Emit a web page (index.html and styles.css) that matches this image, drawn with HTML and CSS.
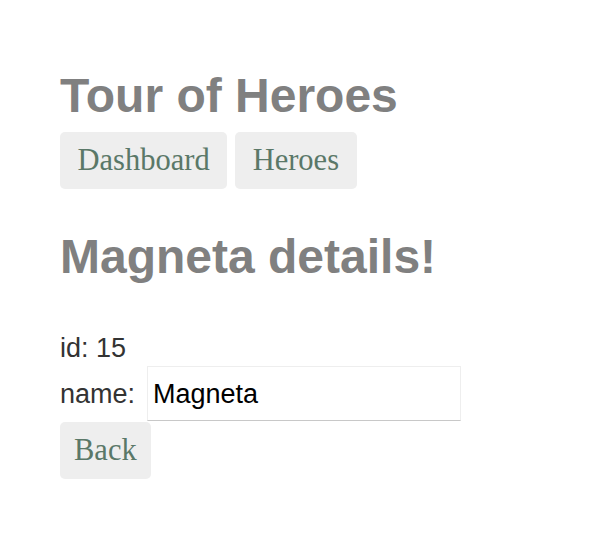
FILE: index.html
```html
<!DOCTYPE html>
<html>
<head>
<meta charset="utf-8">
<title>Tour of Heroes</title>
<link rel="stylesheet" href="styles.css">
</head>
<body>
<div class="app">
  <h1 class="title">Tour of Heroes</h1>
  <nav class="nav">
    <a class="btn">Dashboard</a>
    <a class="btn">Heroes</a>
  </nav>
  <div class="detail">
    <h2 class="title">Magneta details!</h2>
    <div class="row">id: 15</div>
    <div class="row name-row">
      <label class="label">name:</label>
      <input class="field" value="Magneta">
    </div>
    <button class="btn back">Back</button>
  </div>
</div>
</body>
</html>
```
FILE: styles.css
```css
html, body {
  margin: 0;
  padding: 0;
  background: #fff;
}
.app {
  padding: 69px 60px 0 60px;
  font-family: "Liberation Sans", Arial, sans-serif;
  color: #333;
}
.title {
  margin: 0;
  font-family: "Liberation Sans", Arial, sans-serif;
  font-weight: bold;
  font-size: 48px;
  line-height: 54px;
  color: #808080;
}
.nav {
  display: flex;
  gap: 8px;
  margin-top: 9px;
}
.btn {
  display: block;
  height: 57px;
  line-height: 57px;
  padding: 0 17.5px;
  background: #eee;
  border: none;
  border-radius: 5px;
  font-family: "Liberation Serif", Georgia, serif;
  font-size: 30.5px;
  color: #5a7868;
  box-sizing: border-box;
}
.detail {
  margin-top: 41px;
}
.detail .title {
  margin-bottom: 49px;
}
.row {
  font-size: 27px;
  line-height: 30px;
}
.name-row {
  display: flex;
  align-items: baseline;
  gap: 12px;
  margin-top: 3px;
}
.field {
  width: 314px;
  height: 55px;
  box-sizing: border-box;
  margin: 0;
  padding: 2px 5px 0 5px;
  border: 1px solid #eee;
  border-bottom-color: #c8c8c8;
  font-family: "Liberation Sans", Arial, sans-serif;
  font-size: 27px;
  color: #000;
  outline: none;
}
.back {
  margin-top: 1px;
  padding: 0 14px;
}
```
